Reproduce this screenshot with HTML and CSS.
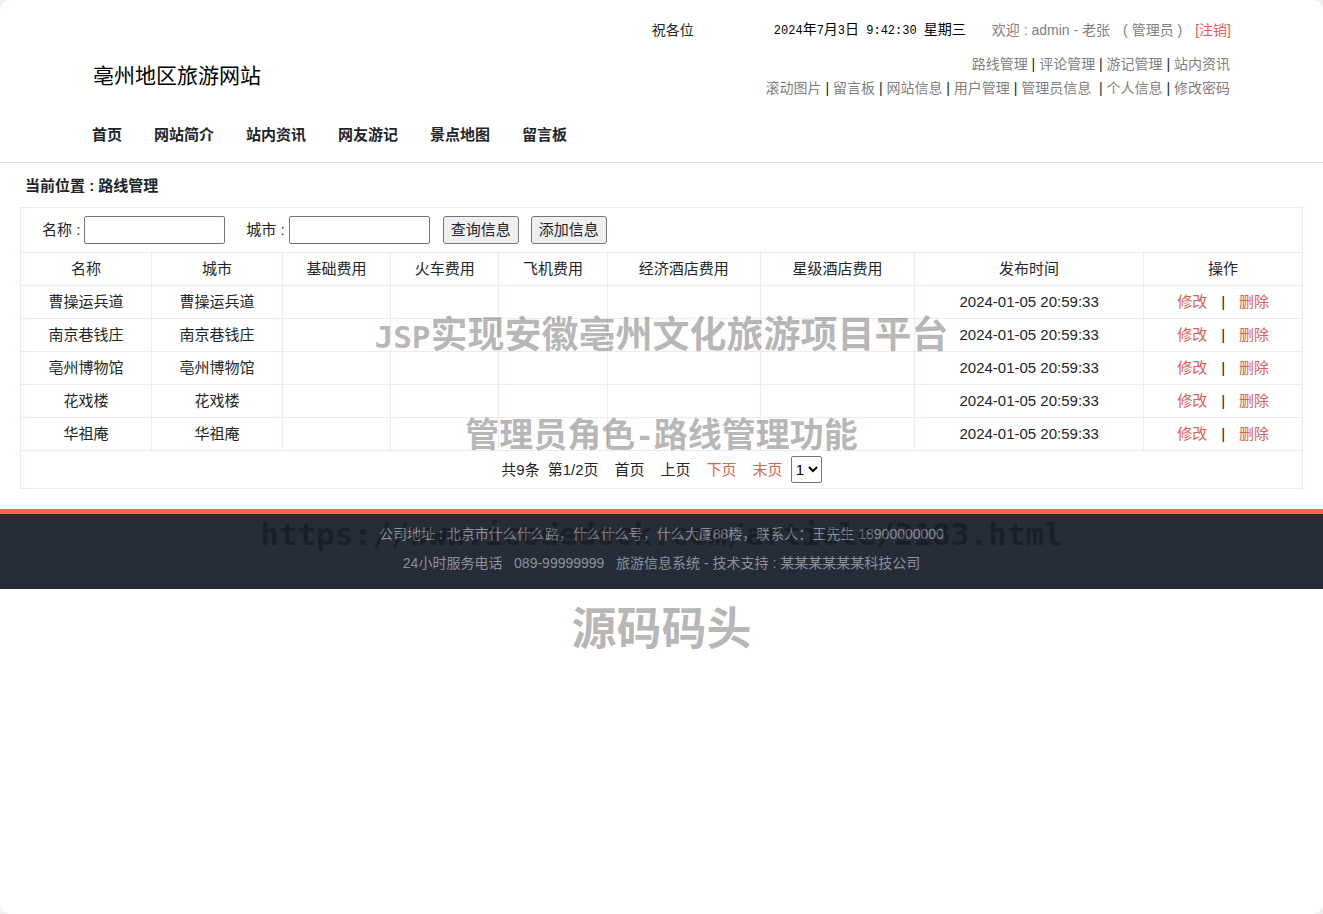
FILE: index.html
```html
<!DOCTYPE html>
<html lang="zh-CN">
<head>
<meta charset="utf-8">
<title>亳州地区旅游网站 - 路线管理</title>
<link rel="stylesheet" href="styles.css">
</head>
<body>
<div class="page">
  <header class="header">
    <div class="logo">亳州地区旅游网站</div>
    <div class="account">
      <div class="status">
        <div class="ticker">祝各位</div>
        <time class="clock">2024<span class="han">年</span>7<span class="han">月</span>3<span class="han">日</span> 9:42:30 <span class="han">星期三</span></time>
        <div class="welcome"><span>欢迎 : admin - 老张</span><span>( 管理员 )</span><a class="logout" href="#">[注销]</a></div>
      </div>
      <div class="admin-links"><a href="#">路线管理</a> | <a href="#">评论管理</a> | <a href="#">游记管理</a> | <a href="#">站内资讯</a></div>
      <div class="admin-links"><a href="#">滚动图片</a> | <a href="#">留言板</a> | <a href="#">网站信息</a> | <a href="#">用户管理</a> | <a href="#">管理员信息</a>&nbsp; | <a href="#">个人信息</a> | <a href="#">修改密码</a></div>
    </div>
    <nav class="nav">
      <a href="#">首页</a><a href="#">网站简介</a><a href="#">站内资讯</a><a href="#">网友游记</a><a href="#">景点地图</a><a href="#">留言板</a>
    </nav>
  </header>

  <main class="main">
    <h1 class="crumb">当前位置 : 路线管理</h1>
    <section class="panel">
      <form class="search">
        <label for="name">名称 :</label><input id="name" type="text">
        <label class="city-label" for="city">城市 :</label><input id="city" type="text">
        <button class="query" type="button">查询信息</button>
        <button class="add" type="button">添加信息</button>
      </form>
      <table class="routes">
        <colgroup><col class="c-name"><col class="c-name"><col class="c-fee"><col class="c-fee"><col class="c-fee"><col class="c-hotel"><col class="c-hotel"><col class="c-time"><col></colgroup>
        <thead>
          <tr><th>名称</th><th>城市</th><th>基础费用</th><th>火车费用</th><th>飞机费用</th><th>经济酒店费用</th><th>星级酒店费用</th><th>发布时间</th><th>操作</th></tr>
        </thead>
        <tbody>
          <tr><td>曹操运兵道</td><td>曹操运兵道</td><td></td><td></td><td></td><td></td><td></td><td>2024-01-05 20:59:33</td><td><div class="actions"><a href="#">修改</a><span>|</span><a href="#">删除</a></div></td></tr>
          <tr><td>南京巷钱庄</td><td>南京巷钱庄</td><td></td><td></td><td></td><td></td><td></td><td>2024-01-05 20:59:33</td><td><div class="actions"><a href="#">修改</a><span>|</span><a href="#">删除</a></div></td></tr>
          <tr><td>亳州博物馆</td><td>亳州博物馆</td><td></td><td></td><td></td><td></td><td></td><td>2024-01-05 20:59:33</td><td><div class="actions"><a href="#">修改</a><span>|</span><a href="#">删除</a></div></td></tr>
          <tr><td>花戏楼</td><td>花戏楼</td><td></td><td></td><td></td><td></td><td></td><td>2024-01-05 20:59:33</td><td><div class="actions"><a href="#">修改</a><span>|</span><a href="#">删除</a></div></td></tr>
          <tr><td>华祖庵</td><td>华祖庵</td><td></td><td></td><td></td><td></td><td></td><td>2024-01-05 20:59:33</td><td><div class="actions"><a href="#">修改</a><span>|</span><a href="#">删除</a></div></td></tr>
        </tbody>
      </table>
      <div class="pager">
        <div class="summary"><span>共9条</span><span>第1/2页</span></div>
        <span>首页</span><span>上页</span><a href="#">下页</a>
        <div class="summary"><a href="#">末页</a><select aria-label="页码"><option>1</option><option>2</option></select></div>
      </div>
    </section>
  </main>

  <footer class="footer">
    <p>公司地址 : 北京市什么什么路，什么什么号，什么大厦88楼，联系人：王先生 18900000000</p>
    <p>24小时服务电话 &nbsp; 089-99999999 &nbsp; 旅游信息系统 - 技术支持 : 某某某某某某科技公司</p>
  </footer>

  <div class="mark mark-title"><span class="mark-latin">JSP</span>实现安徽亳州文化旅游项目平台</div>
  <div class="mark mark-role">管理员角色<span class="mark-latin">-</span>路线管理功能</div>
  <div class="mark mark-url">https://www.icodedock.com/article/2183.html</div>
  <div class="mark mark-brand">源码码头</div>
</div>
</body>
</html>
```
FILE: styles.css
```css
* { box-sizing: border-box; }

body {
  margin: 0;
  background: #f0f0f0;
  color: #212529;
  font: 15px/24px "Liberation Sans", "Noto Sans CJK SC", sans-serif;
}

a { color: #e0604f; text-decoration: none; }

.page {
  position: relative;
  min-height: 100vh;
  border-radius: 10px;
  background: #fff;
  overflow: hidden;
}

/* Header */
.header {
  display: grid;
  grid-template-columns: auto 1fr;
  padding: 18px 92px 15px;
  border-bottom: 1px solid #ddd;
}
.logo {
  padding-top: 42px;
  padding-left: 1px;
  font-size: 21px;
  line-height: 32px;
  color: #000;
}
.account { font-size: 14px; text-align: right; }
.status { display: flex; justify-content: flex-end; margin-bottom: 9px; }
.ticker { width: 42px; margin-right: 80px; overflow: hidden; white-space: nowrap; }
.clock {
  margin-right: 26px;
  font-family: "Liberation Mono", "Noto Sans CJK SC", monospace;
  font-size: 12px;
  color: #000;
}
.han { font-size: 14px; }
.welcome { display: flex; gap: 13px; color: #808080; }
.admin-links { padding-right: 1px; }
.admin-links a { color: #808080; }
.nav {
  grid-column: 1 / -1;
  display: flex;
  gap: 32px;
  margin-top: 23px;
  font-weight: bold;
}
.nav a { color: #212529; }

/* Route list */
.main { padding: 11px 20px 20px; }
.crumb { margin: 0 0 9px; padding-left: 5px; font-size: 15px; }
.panel { border: 1px solid #f4e8ea; }
.search { display: flex; align-items: center; padding: 8px 21px; }
.search input {
  width: 141px;
  height: 28px;
  margin-left: 4px;
  border: 1px solid #767676;
  border-radius: 2px;
  font: inherit;
}
.city-label { margin-left: 21px; }
.search button {
  width: 76px;
  height: 28px;
  padding: 0;
  border: 1px solid #767676;
  border-radius: 3px;
  background: #efefef;
  color: #212529;
  font: inherit;
}
.query { margin-left: 13px; }
.add { margin-left: 12px; }

.routes { width: 100%; table-layout: fixed; border-collapse: collapse; }
.c-name { width: 10.2%; }
.c-fee { width: 8.45%; }
.c-hotel { width: 12%; }
.c-time { width: 17.9%; }
.routes th, .routes td {
  height: 33px;
  padding: 0;
  border: 1px solid #f4e8ea;
  font-weight: normal;
  text-align: center;
}
.routes th:first-child, .routes td:first-child { border-left: 0; }
.routes th:last-child, .routes td:last-child { border-right: 0; }
.actions { display: flex; justify-content: center; gap: 14px; }

.pager { display: flex; justify-content: center; align-items: center; gap: 16px; padding: 5px 0; }
.summary { display: flex; align-items: center; gap: 8px; }
.pager select {
  width: 31px;
  height: 27px;
  padding: 0;
  border: 1px solid #767676;
  border-radius: 2px;
  background: #fff;
  color: #000;
  font: inherit;
}

/* Footer */
.footer {
  padding: 6px 0 11px;
  border-top: 5px solid #fe6250;
  background: #262d38;
  color: #8b9199;
  font-size: 14px;
  line-height: 29px;
  text-align: center;
}
.footer p { margin: 0; }

/* Overlaid watermark lines */
.mark {
  position: absolute;
  left: 0;
  right: 0;
  color: rgba(0, 0, 0, 0.3);
  font-family: "Noto Sans CJK SC", sans-serif;
  font-weight: bold;
  text-align: center;
  white-space: nowrap;
  pointer-events: none;
}
.mark-title { top: 308px; font-size: 37px; line-height: 48px; }
.mark-role { top: 409px; font-size: 34px; line-height: 48px; }
.mark-url { top: 510px; font-family: "DejaVu Sans Mono", monospace; font-size: 31px; line-height: 48px; }
.mark-brand { top: 596px; font-size: 45px; line-height: 60px; }
.mark-latin { font-family: "DejaVu Sans Mono", monospace; font-size: 31px; }
```
